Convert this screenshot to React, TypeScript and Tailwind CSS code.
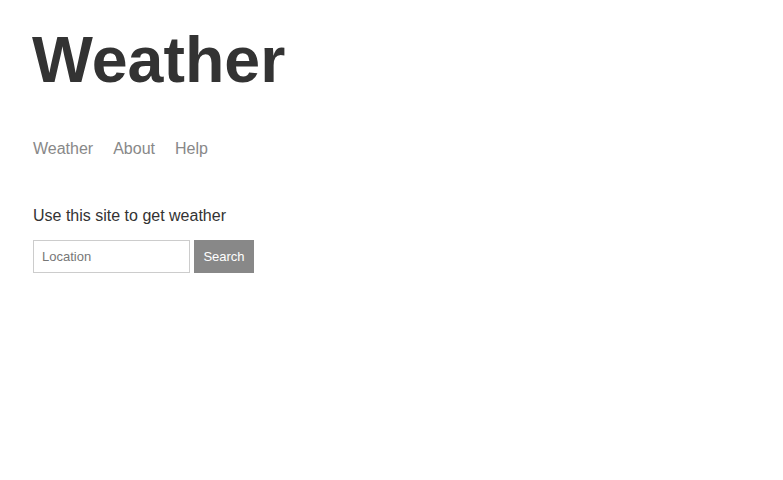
export default function App() {
  return (
    <div
      className="min-h-screen bg-white pl-[32px] pt-[28px] text-[#333]"
      style={{ fontFamily: '"Liberation Sans", Arial, sans-serif' }}
    >
      <h1 className="text-[64.5px] leading-[64px] font-bold text-[#333]">Weather</h1>
      <nav className="mt-[45px] flex gap-[20px] text-[16px] leading-[24px] text-[#888]">
        <a href="#" className="pl-[1px]">Weather</a>
        <a href="#">About</a>
        <a href="#">Help</a>
      </nav>
      <p className="mt-[43px] pl-[1px] text-[16px] leading-[24px] text-[#333]">Use this site to get weather</p>
      <form className="mt-[12px] flex gap-[4px] pl-[1px]" onSubmit={(e) => e.preventDefault()}>
        <input
          type="text"
          placeholder="Location"
          className="h-[33px] w-[157px] border border-[#ccc] px-[8px] text-[13px] text-[#333] placeholder:text-[#777] outline-none"
        />
        <button
          type="submit"
          className="h-[33px] w-[60px] bg-[#888] text-[13px] text-white"
        >
          Search
        </button>
      </form>
    </div>
  );
}
